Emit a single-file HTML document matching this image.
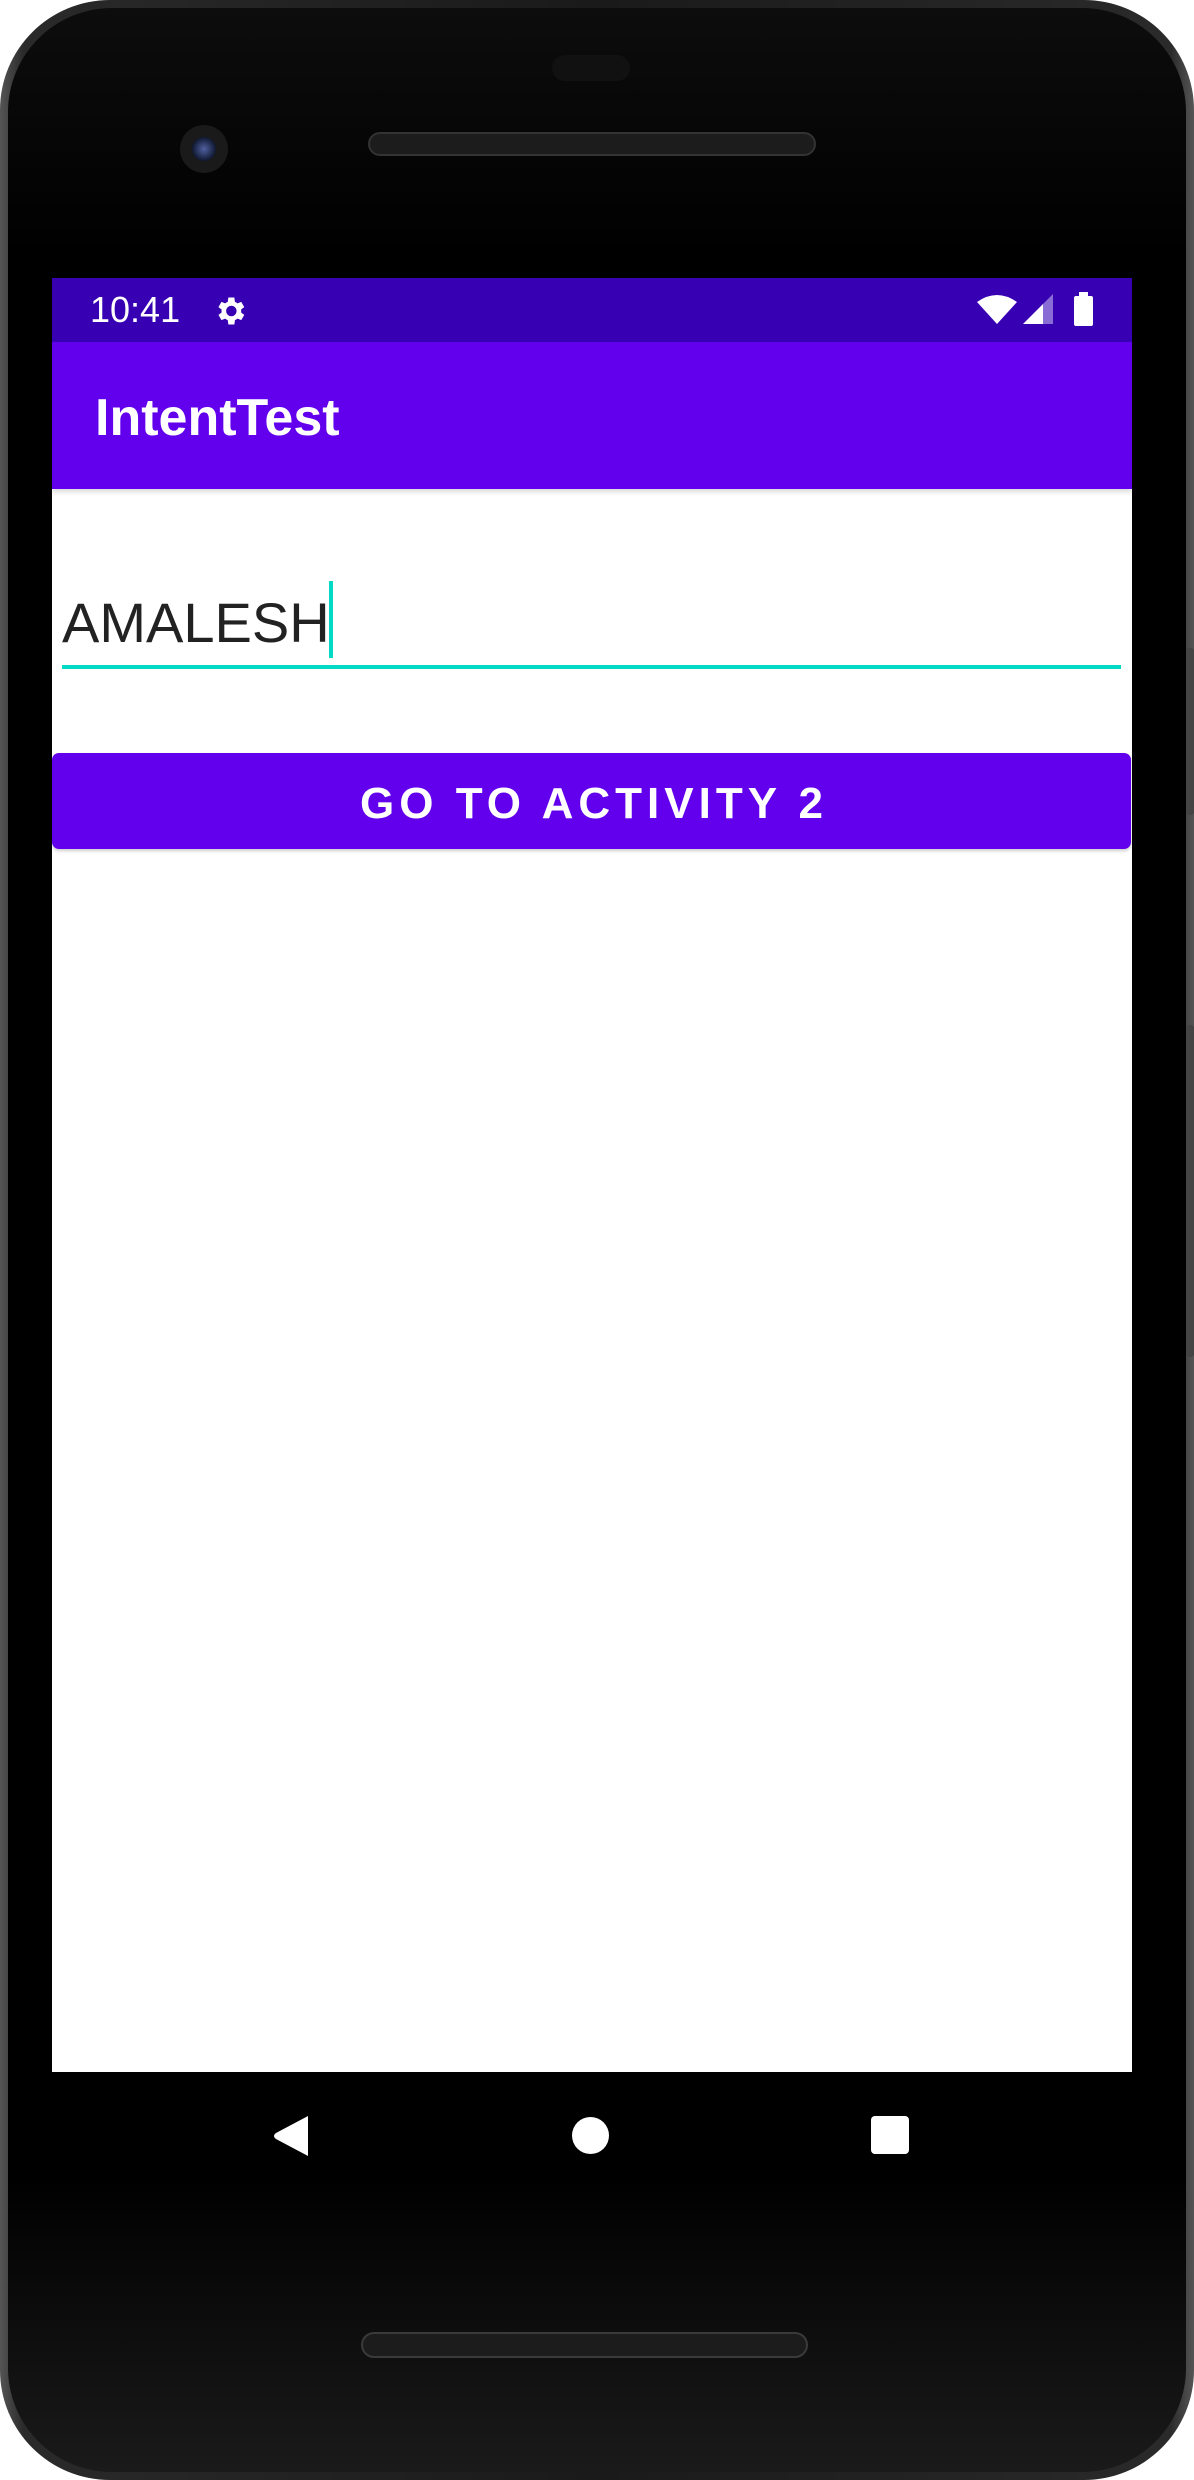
<!DOCTYPE html>
<html><head><meta charset="utf-8"><style>
html,body{margin:0;padding:0;background:#fff;}
body{width:1194px;height:2480px;position:relative;overflow:hidden;font-family:"Liberation Sans",sans-serif;}
.abs{position:absolute;}
.body{left:0;top:0;width:1194px;height:2480px;border-radius:110px;background:linear-gradient(90deg,#555,#2a2a2a 2%,#1a1a1a 50%,#2a2a2a 98%,#555);}
.inner{left:8px;top:8px;width:1178px;height:2464px;border-radius:104px;background:linear-gradient(180deg,#0d0d0d,#000 10%,#000 88%,#1a1a1a);}
.screen{left:52px;top:278px;width:1080px;height:1794px;background:#fff;overflow:hidden;}
.sb{left:0;top:0;width:1080px;height:64px;background:#3700B3;}
.ab{left:0;top:64px;width:1080px;height:147px;background:#6200EE;box-shadow:0 3px 5px rgba(0,0,0,.15);}
</style></head><body>
<div class="abs body"></div>
<div class="abs inner"></div>
<div class="abs" style="left:1186px;top:648px;width:8px;height:167px;background:#444;border-radius:3px"></div>
<div class="abs" style="left:1186px;top:1025px;width:8px;height:332px;background:#444;border-radius:3px"></div>
<div class="abs" style="left:552px;top:55px;width:78px;height:26px;border-radius:13px;background:#111"></div>
<div class="abs" style="left:368px;top:132px;width:448px;height:24px;border-radius:12px;background:#1c1c1c;border:2px solid #333;box-sizing:border-box"></div>
<div class="abs" style="left:180px;top:125px;width:48px;height:48px;border-radius:50%;background:#1a1a1a"></div>
<div class="abs" style="left:192px;top:137px;width:24px;height:24px;border-radius:50%;background:radial-gradient(circle,#5060a0,#101830 70%)"></div>
<div class="abs" style="left:361px;top:2332px;width:447px;height:26px;border-radius:13px;background:#1c1c1c;border:2px solid #3a3a3a;box-sizing:border-box"></div>

<div class="abs screen">
 <div class="abs sb">
  <div class="abs" style="left:38px;top:10px;color:#fff;font-size:36px;line-height:44px">10:41</div>
  <svg class="abs" style="left:160px;top:15px" width="36" height="36" viewBox="0 0 24 24"><path fill="#fff" d="M19.4 13a7.5 7.5 0 0 0 0-2l2.1-1.6-2-3.5-2.5 1a7.6 7.6 0 0 0-1.7-1L14.9 3h-4l-.4 2.9a7.6 7.6 0 0 0-1.7 1l-2.5-1-2 3.5L6.4 11a7.5 7.5 0 0 0 0 2l-2.1 1.6 2 3.5 2.5-1a7.6 7.6 0 0 0 1.7 1l.4 2.9h4l.4-2.9a7.6 7.6 0 0 0 1.7-1l2.5 1 2-3.5zM12.9 15.5a3.5 3.5 0 1 1 0-7 3.5 3.5 0 0 1 0 7z"/></svg>
  <svg class="abs" style="left:925px;top:16px" width="40" height="30" viewBox="0 0 40 30"><path fill="#fff" d="M0 8 Q20 -6 40 8 L20 30 Z"/></svg>
  <svg class="abs" style="left:971px;top:16px" width="30" height="30" viewBox="0 0 30 30"><path fill="#fff" d="M0 30 L20 10 L20 30Z"/><path fill="#8a6cd6" d="M20 10 L30 0 L30 30 L20 30Z"/></svg>
  <div class="abs" style="left:1022px;top:18px;width:19px;height:30px;background:#fff;border-radius:2px"></div>
  <div class="abs" style="left:1027px;top:14px;width:9px;height:5px;background:#fff"></div>
 </div>
 <div class="abs ab">
  <div class="abs" style="left:43px;top:46px;color:#fff;font-size:52px;font-weight:bold;line-height:60px;letter-spacing:0px">IntentTest</div>
 </div>
 <div class="abs" style="left:10px;top:310px;color:#222;font-size:56px;line-height:70px">AMALESH</div>
 <div class="abs" style="left:277px;top:303px;width:4px;height:77px;background:#03DAC5"></div>
 <div class="abs" style="left:10px;top:387px;width:1059px;height:4px;background:#03DAC5"></div>
 <div class="abs" style="left:0;top:475px;width:1079px;height:96px;background:#6200EE;border-radius:7px;box-shadow:0 2px 3px rgba(0,0,0,.2)"></div>
 <div class="abs" style="left:0;top:478px;width:1079px;height:96px;line-height:96px;text-align:center;color:#fff;font-size:44px;font-weight:bold;letter-spacing:5px;text-indent:5px">GO TO ACTIVITY 2</div>
</div>

<svg class="abs" style="left:272px;top:2116px" width="38" height="40" viewBox="0 0 38 40"><path fill="#fff" d="M36 0 L36 40 L4 23 Q0 20 4 17Z"/></svg>
<div class="abs" style="left:572px;top:2117px;width:37px;height:37px;border-radius:50%;background:#fff"></div>
<div class="abs" style="left:871px;top:2116px;width:38px;height:38px;border-radius:4px;background:#fff"></div>
</body></html>
